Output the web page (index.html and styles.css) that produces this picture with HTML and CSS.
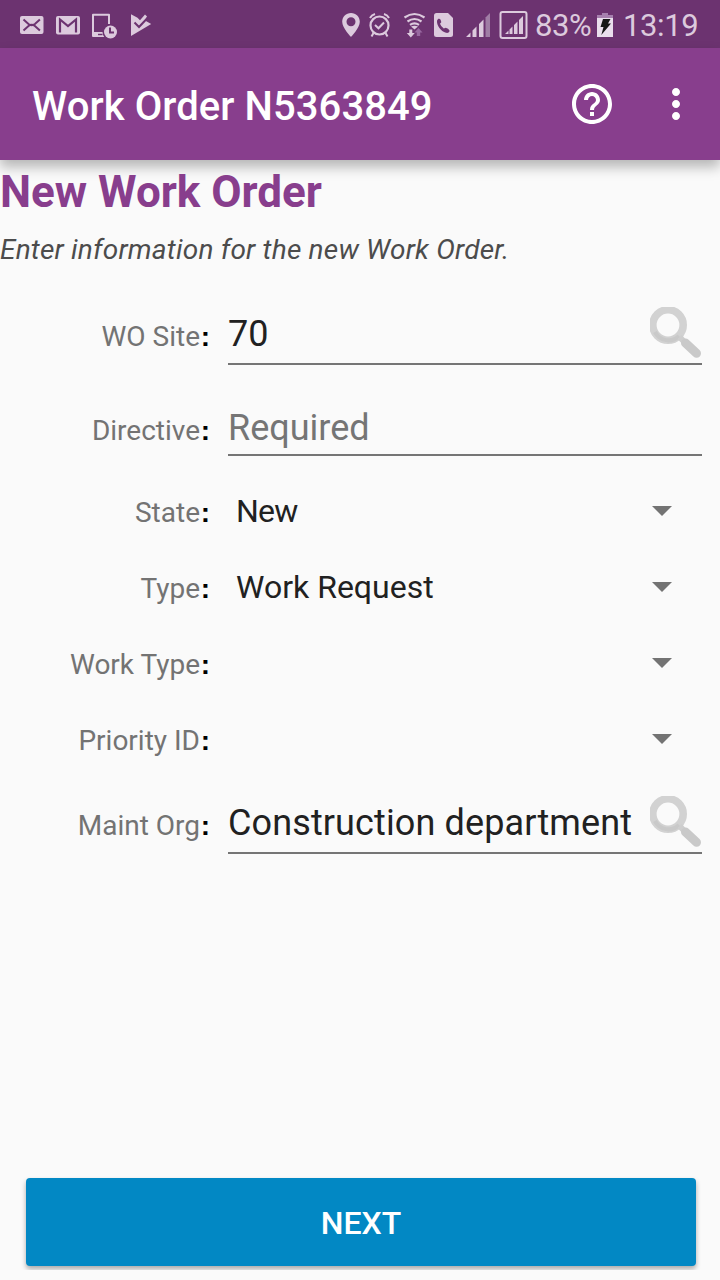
FILE: index.html
```html
<!DOCTYPE html>
<html lang="en">
<head>
<meta charset="utf-8">
<title>Work Order</title>
<link rel="stylesheet" href="styles.css">
</head>
<body>
<svg class="defs" width="0" height="0">
  <defs>
    <symbol id="search" viewBox="0 0 52 52">
      <circle cx="18" cy="18" r="15.200" fill="none" stroke="#d2d2d2" stroke-width="7.600"/>
      <path d="M5 25a15 15 0 0 0 24 4" fill="none" stroke="#c9c9c9" stroke-width="4"/>
      <path d="M29.500 30l5 5" stroke="#cecece" stroke-width="6"/>
      <path d="M35.500 36l11 10.300" stroke="#c9c9c9" stroke-width="9" stroke-linecap="round"/>
    </symbol>
  </defs>
</svg>
<div class="screen">
  <div class="status">
    <svg class="status-icons" width="160" height="48" viewBox="0 0 160 48">
      <rect x="20" y="16" width="23.500" height="18" rx="2" fill="#dccadd"/>
      <path d="M23.500 19.500l5 4.500q3.200 2.400 6.400 0l5-4.500M23.500 30.500l5-4.500q3.200-2.400 6.400 0l5 4.500" fill="none" stroke="#6c3370" stroke-width="2"/>
      <rect x="56" y="16" width="24" height="18.500" rx="2" fill="#dccadd"/>
      <path d="M60 32.500V19.500l8 6.500 8-6.500v13" fill="none" stroke="#6c3370" stroke-width="2.200"/>
      <path d="M109 24v-9.200h-16V36h11.500" fill="none" stroke="#dccadd" stroke-width="2" stroke-linejoin="round"/>
      <path d="M94 32h10v4H94z" fill="#dccadd"/>
      <path d="M98 34.500h4.500" stroke="#6c3370" stroke-width="1.400"/>
      <circle cx="110.500" cy="32" r="8" fill="#6c3370"/>
      <circle cx="110.500" cy="32" r="6.500" fill="#dccadd"/>
      <path d="M110 27.500v5h4" fill="none" stroke="#6c3370" stroke-width="2"/>
      <path d="M131 14.300l6.500 3.500 2.500 2.500 5-5.800 2 2-2 4 6.200 3.500L131 36z" fill="#dccadd"/>
      <path d="M134.500 22.500l4.500 4.500 8.500-9" fill="none" stroke="#6c3370" stroke-width="2"/>
    </svg>
    <svg class="status-icons" width="198" height="48" viewBox="330 0 198 48">
      <g fill="#dccadd">
        <path fill-rule="evenodd" d="M351 13c-5 0-8.800 3.800-8.800 8.800C342.200 28 351 37 351 37s8.800-9 8.800-15.200c0-5-3.800-8.800-8.800-8.800zm0 4.300a4.500 4.500 0 1 1 0 9 4.500 4.500 0 0 1 0-9z"/>
        <path d="M436.500 13h11.500l5 5v16.500q0 2.500-2.500 2.500h-14q-2.500 0-2.500-2.500v-19q0-2.500 2.500-2.500z"/>
        <path d="M466 37l4.500-4.500V37zM472.500 30.500l4-4V37h-4zM479 24l4.500-4.500V37H479z"/>
        <path d="M505 34l3.500-3.500V34zM509.500 29.500l3-3V34h-3zM514 25l3.500-3.500V34H514zM519 20l4-4v18h-4z"/>
        <path d="M409.300 29.500h3v3.500h2.500l-4 4.500-4-4.500h2.500z"/>
      </g>
      <path d="M485.500 17.500l4.500-4.500v24h-4.500z" fill="#a07da5"/>
      <path d="M416.800 36h3.400v-3.500h2.300l-4-4.500-4 4.500h2.300z" fill="#9868a0"/>
      <circle cx="379.500" cy="25.500" r="9" fill="none" stroke="#dccadd" stroke-width="2.200"/>
      <path d="M375 25l3.500 3.300 5.500-5.800M370 18q1.500-3 5-4M389 18q-1.500-3-5-4M373.500 33l-2 3.500M385.500 33l2 3.500" fill="none" stroke="#dccadd" stroke-width="2"/>
      <path d="M404.500 17.500q10-7 20 0M407.500 21.500q7-5 14 0M410 24.800q4.500-3 9 0" fill="none" stroke="#dccadd" stroke-width="2.200"/>
      <path d="M411 26.500q3.500-1.500 7 0l-3.500 3z" fill="#dccadd"/>
      <path d="M438 19c2-1 3 .8 3.300 3.300l-1.300 1.500q1 3 3.800 4.800l1.900-.8q2.800.8 3.800 2.700c.3 1.800-1.700 2.800-3.500 2.300-5.300-1.500-9.300-7-9-12z" fill="#6c3370"/>
      <rect x="500.500" y="12" width="26" height="26" rx="2" fill="none" stroke="#dccadd" stroke-width="2"/>
    </svg>
    <span class="percent">83%</span>
    <svg class="status-icons" width="16" height="48" viewBox="0 0 16 48">
      <path d="M0 15h5v-2h6v2h5v3H0z" fill="#a67fae"/>
      <path d="M0 18h16v19H0z" fill="#eadeed"/>
      <path d="M6 19h7.500l-2.500 4.500h3L4.300 35l2.200-8H3.500z" fill="#171717"/>
    </svg>
    <span class="clock">13:19</span>
  </div>
  <header class="appbar">
    <h1 class="appbar-title">Work Order N5363849</h1>
    <svg width="48" height="48" viewBox="0 0 24 24" fill="#fff"><path d="M11 18h2v-2h-2v2zm1-16C6.480 2 2 6.480 2 12s4.480 10 10 10 10-4.480 10-10S17.520 2 12 2zm0 18c-4.410 0-8-3.590-8-8s3.590-8 8-8 8 3.590 8 8-3.590 8-8 8zm0-14c-2.210 0-4 1.790-4 4h2c0-1.100.9-2 2-2s2 .9 2 2c0 2-3 1.750-3 5h2c0-2.250 3-2.500 3-5 0-2.210-1.790-4-4-4z"/></svg>
    <svg class="more" width="48" height="48" viewBox="0 0 24 24" fill="#fff"><path d="M12 8c1.100 0 2-.9 2-2s-.9-2-2-2-2 .9-2 2 .9 2 2 2zm0 2c-1.100 0-2 .9-2 2s.9 2 2 2 2-.9 2-2-.9-2-2-2zm0 6c-1.100 0-2 .9-2 2s.9 2 2 2 2-.9 2-2-.9-2-2-2z"/></svg>
  </header>
  <main class="content">
    <h2 class="heading">New Work Order</h2>
    <p class="hint">Enter information for the new Work Order.</p>
    <div class="row">
      <div class="label">WO Site<b class="colon">:</b></div>
      <div class="input tall"><span class="value">70</span><svg class="search" width="52" height="52"><use href="#search"/></svg></div>
    </div>
    <div class="row directive">
      <div class="label">Directive<b class="colon">:</b></div>
      <div class="input"><span class="value placeholder">Required</span></div>
    </div>
    <div class="selects">
      <div class="row">
        <div class="label">State<b class="colon">:</b></div>
        <div class="select"><span class="state">New</span><i class="arrow"></i></div>
      </div>
      <div class="row">
        <div class="label">Type<b class="colon">:</b></div>
        <div class="select"><span>Work Request</span><i class="arrow"></i></div>
      </div>
      <div class="row">
        <div class="label">Work Type<b class="colon">:</b></div>
        <div class="select"><span>&nbsp;</span><i class="arrow"></i></div>
      </div>
      <div class="row">
        <div class="label">Priority ID<b class="colon">:</b></div>
        <div class="select"><span>&nbsp;</span><i class="arrow"></i></div>
      </div>
    </div>
    <div class="row">
      <div class="label">Maint Org<b class="colon">:</b></div>
      <div class="input tall"><span class="value department">Construction department</span><svg class="search" width="52" height="52"><use href="#search"/></svg></div>
    </div>
  </main>
  <footer class="footer"><button class="next">NEXT</button></footer>
</div>
</body>
</html>
```
FILE: styles.css
```css
* { box-sizing: border-box; }
body { margin: 0; font-family: Roboto, sans-serif; }
.defs { display: block; }
.screen { width: 720px; height: 1280px; display: flex; flex-direction: column; background: #fafafa; overflow: hidden; }
.status { height: 48px; flex: none; display: flex; background: #6c3370; color: #dccadd; font-size: 31px; letter-spacing: -.4px; line-height: 52px; white-space: nowrap; }
.status-icons { flex: none; }
.status-icons + .status-icons { margin-left: 170px; }
.percent { width: 69px; padding-left: 7px; }
.clock { padding-left: 10px; }
.appbar { height: 112px; flex: none; display: flex; align-items: center; padding-left: 32px; background: #883e8d; box-shadow: 0 7px 12px rgba(0,0,0,.28); }
.appbar-title { margin: 6px 0 0; width: 536px; color: #fff; font-size: 40px; font-weight: 500; letter-spacing: .08px; line-height: 48px; white-space: nowrap; }
.more { margin-left: 36px; }
.content { flex: 1; }
.heading { margin: 0; padding-top: 5px; height: 64px; color: #883e8d; font-size: 44px; font-weight: 700; line-height: 54px; white-space: nowrap; }
.hint { margin: 0; height: 86px; padding-top: 9px; color: #4c4c4c; font-size: 28px; font-style: italic; letter-spacing: .21px; line-height: 33px; white-space: nowrap; }
.row { display: flex; align-items: baseline; }
.label { width: 228px; padding-right: 17px; text-align: right; color: #737373; font-size: 28px; line-height: 36px; white-space: nowrap; }
.colon { display: inline-block; width: 11px; color: #000; font-family: "Liberation Sans", sans-serif; text-align: center; }
.input { width: 474px; height: 52px; display: flex; align-items: baseline; border-bottom: 2px solid #757575; }
.tall { height: 55px; }
.value { flex: 1; color: #212121; font-size: 36px; line-height: 48px; white-space: nowrap; }
.placeholder { color: #757575; }
.department { letter-spacing: .12px; }
.search { flex: none; align-self: flex-start; margin-top: -3px; }
.directive { margin-top: 39px; }
.selects { margin: 17px 0 22px; }
.select { width: 444px; height: 76px; padding-left: 8px; display: flex; align-items: baseline; justify-content: space-between; color: #212121; font-size: 32px; line-height: 76px; }
.state { letter-spacing: -.8px; }
.arrow { align-self: center; border: 10px solid transparent; border-top-color: #737373; border-bottom: 0; }
.footer { height: 110px; padding: 8px 24px 10px 26px; clip-path: inset(0 0 10px 0); }
.next { display: block; width: 670px; height: 88px; padding: 2px 0 0; border: 0; border-radius: 4px; background: #0288c4; color: #fff; font-family: inherit; font-size: 32px; font-weight: 500; box-shadow: 0 3px 5px rgba(0,0,0,.32); }
```
